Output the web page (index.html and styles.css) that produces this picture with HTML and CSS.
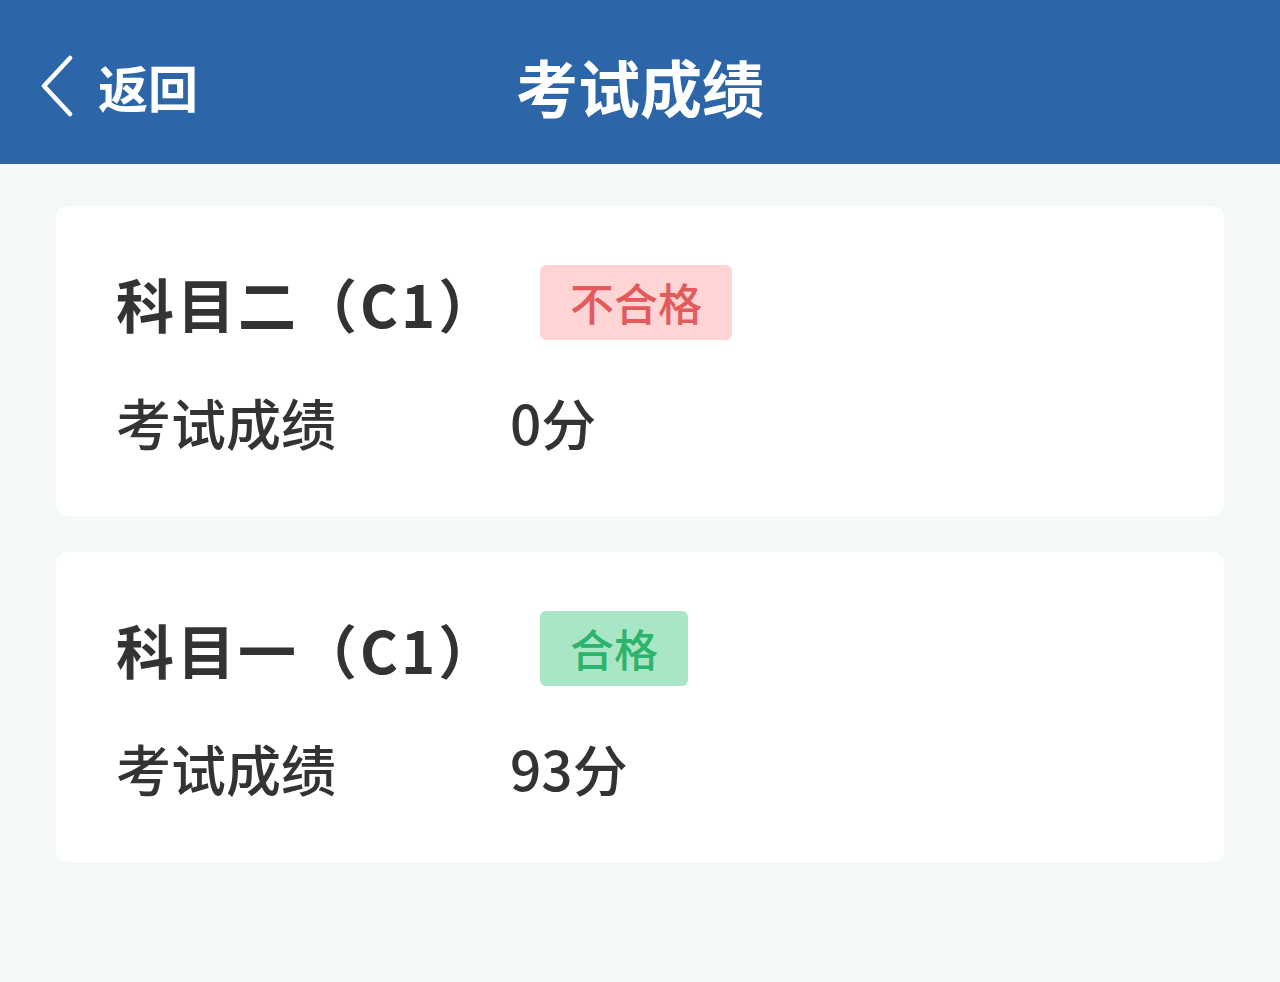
FILE: index.html
```html
<!DOCTYPE html>
<html lang="zh-CN">
<head>
  <meta charset="UTF-8">
  <meta name="viewport" content="width=device-width, initial-scale=1.0">
  <title>考试成绩</title>
  <link rel="stylesheet" href="styles.css">
</head>
<body>
  <header class="topbar">
    <a class="back" href="#">
      <svg class="back-icon" width="34" height="62" viewBox="0 0 34 62">
        <path d="M30 3 L4 31 L30 59" fill="none" stroke="#fff" stroke-width="4.5" stroke-linecap="round" stroke-linejoin="round"/>
      </svg>
      <span>返回</span>
    </a>
    <h1>考试成绩</h1>
  </header>

  <main class="list">
    <div class="card">
      <div class="card-head">
        <span class="subject">科目二（C1）</span>
        <span class="tag tag-fail">不合格</span>
      </div>
      <div class="row">
        <span class="label">考试成绩</span>
        <span class="value">0分</span>
      </div>
    </div>

    <div class="card">
      <div class="card-head">
        <span class="subject">科目一（C1）</span>
        <span class="tag tag-pass">合格</span>
      </div>
      <div class="row">
        <span class="label">考试成绩</span>
        <span class="value">93分</span>
      </div>
    </div>
  </main>
</body>
</html>
```

FILE: styles.css
```css
body {
  margin: 0;
  padding: 0;
  background-color: #f4f8f8;
  font-family: "Noto Sans CJK SC", "Noto Sans", sans-serif;
  color: #333;
}
.topbar {
  position: relative;
  box-sizing: border-box;
  height: 164px;
  padding-top: 8px;
  background-color: #2d66a8;
  color: #fff;
  display: flex;
  align-items: center;
  justify-content: center;
}
.topbar h1 {
  margin: 0;
  font-size: 62px;
  font-weight: 700;
  line-height: 1;
}
.back {
  position: absolute;
  left: 40px;
  top: 0;
  height: 164px;
  padding-top: 8px;
  box-sizing: border-box;
  display: flex;
  align-items: center;
  color: #fff;
  text-decoration: none;
  font-size: 50px;
  font-weight: 700;
}
.back-icon {
  margin-right: 24px;
}
.list {
  padding: 42px 56px;
  display: flex;
  flex-direction: column;
  gap: 36px;
}
.card {
  box-sizing: border-box;
  height: 310px;
  background: #fff;
  border-radius: 12px;
  padding: 59px 60px 0;
}
.card-head {
  display: flex;
  align-items: center;
  height: 75px;
}
.subject {
  font-size: 58px;
  font-weight: 700;
  letter-spacing: 3px;
  width: 424px;
}
.tag {
  height: 75px;
  line-height: 75px;
  padding: 0 30px;
  border-radius: 6px;
  font-size: 44px;
  font-weight: 500;
}
.tag-fail {
  background-color: #ffd4d4;
  color: #e35a5c;
}
.tag-pass {
  background-color: #a9e6c5;
  color: #2db36b;
}
.row {
  margin-top: 51px;
  display: flex;
  line-height: 60px;
  font-size: 55px;
  font-weight: 500;
}
.label {
  width: 394px;
}
```
